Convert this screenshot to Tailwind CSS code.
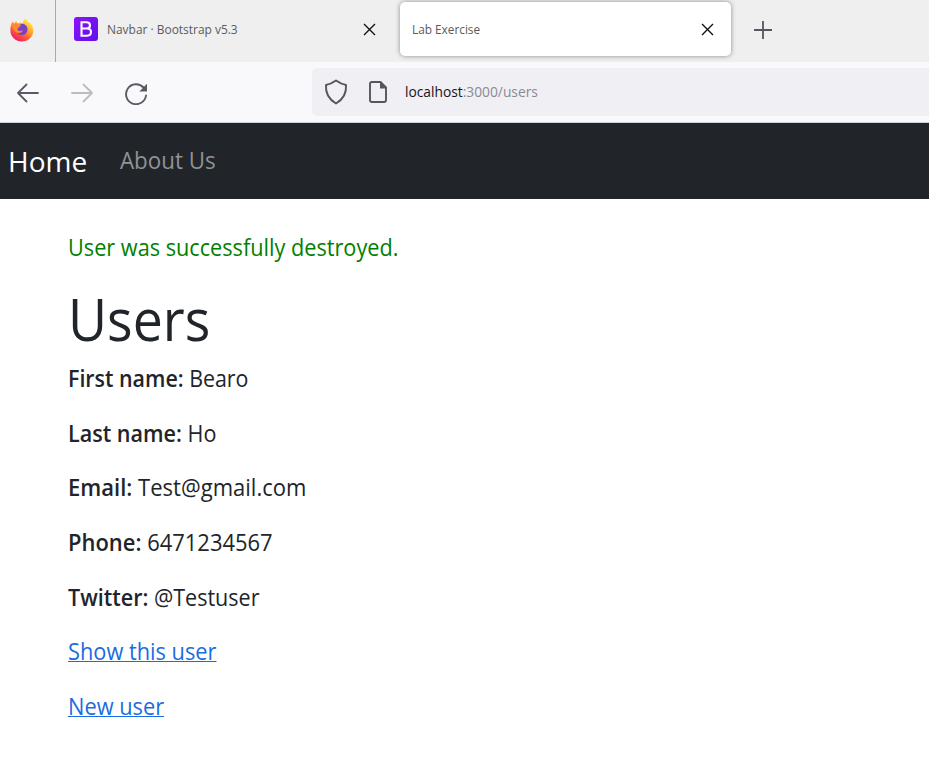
<!DOCTYPE html>
<html lang="en"><head><meta charset="utf-8"><title>Lab Exercise</title>
<script src="https://cdn.jsdelivr.net/npm/@tailwindcss/browser@4"></script></head>
<body class="h-[764px] w-[929px] overflow-hidden bg-white font-['Open_Sans',sans-serif] text-[#212529]">
<header class="h-[123px] border-b border-[#cfcfd8] bg-[#f9f9fb]">
<div class="flex h-[62px] bg-[#efefef]">
<div class="flex w-[56px] items-center border-r border-[#aaa] pl-[10px] pb-[3px]">
<svg class="size-6" viewBox="0 0 24 24"><defs><linearGradient id="fx" x1=".85" y1=".05" x2=".25" y2="1"><stop offset="0" stop-color="#fff44f"/><stop offset=".35" stop-color="#ffb02e"/><stop offset=".65" stop-color="#ff5b36"/><stop offset="1" stop-color="#f0146b"/></linearGradient></defs><path d="M.6 9 2.300 3.500l2 2.200L6 3l1.500 2.500q2-1.500 5.500-.5 0-2.500 2.500-4.500 1.500 2.500 4 4.500l.5-.5q3.300 4 3.300 8a11.400 11 0 0 1-22.900 0q0-2 .2-3.500Z" fill="url(#fx)"/><path d="M8 7.500q3-2.500 6-1.500 4 2 3.500 6-1 5-5.500 5-5 0-5-4.500Z" fill="#7841c8"/><path d="M2 7q3-3 6-1l3 .5-1 2-2.500 2q0 2.500 2.500 2.500l3-.5q-1.500 3-5 2.500Q3 13.500 2 7Z" fill="#ff8a2b"/></svg>
</div>
<div class="flex w-[344px] items-center pl-[18px] pr-[24px] pb-[4px]">
<svg class="size-6" viewBox="0 0 24 24"><defs><linearGradient id="bs" x2="1" y2="1"><stop stop-color="#8b13fb"/><stop offset="1" stop-color="#6210ed"/></linearGradient></defs><rect width="24" height="24" rx="3" fill="url(#bs)"/><path d="M7.500 5.300h5q3.500 0 3.500 3.100t-3.500 3.100h-5Zm0 6.200h5.500q4 0 4 3.600t-4 3.600H7.500Z" fill="none" stroke="#fff" stroke-width="2.100"/></svg>
<span class="mt-[2px] ml-[9px] origin-left scale-x-[.955] whitespace-nowrap text-[12.5px] text-[#5b5b5b]">Navbar · Bootstrap v5.3</span>
<svg class="ml-auto size-[13px]" viewBox="0 0 13 13"><path d="m1 1 11 11M12 1 1 12" stroke="#111" stroke-width="1.4"/></svg>
</div>
<div class="mt-[2px] flex h-[54px] w-[331px] items-center rounded-[5px] bg-white pl-[12px] pr-[17px] shadow-[0_0_5px_#0000006b]">
<span class="mt-[2px] origin-left scale-x-[.945] whitespace-nowrap text-[12.5px] text-[#5b5b5b]">Lab Exercise</span>
<svg class="ml-auto size-[13px]" viewBox="0 0 13 13"><path d="m1 1 11 11M12 1 1 12" stroke="#111" stroke-width="1.4"/></svg>
</div>
<svg class="mt-[21px] ml-[23px] size-[18px]" viewBox="0 0 18 18"><path d="M9 .5v17M.5 9h17" stroke="#55555e" stroke-width="1.800" stroke-linecap="round"/></svg>
</div>
<div class="flex h-[60px] items-center">
<svg class="mt-[2px] ml-[17px] size-[22px]" viewBox="0 0 22 22" fill="none" stroke="#5b5b66" stroke-width="1.800" stroke-linecap="round" stroke-linejoin="round"><path d="M21 11H1M9.500 2.500 1 11l8.500 8.500"/></svg>
<svg class="mt-[2px] ml-[32px] size-[22px]" viewBox="0 0 22 22" fill="none" stroke="#bcbcc2" stroke-width="1.800" stroke-linecap="round" stroke-linejoin="round"><path d="M1 11h20m-8.500-8.500L21 11l-8.500 8.500"/></svg>
<svg class="mt-[3px] ml-[32px] size-[22px]" viewBox="0 0 22 22"><path d="M18.500 4.500A10 10 0 1 0 21 12.500" fill="none" stroke="#5b5b66" stroke-width="1.900" stroke-linecap="round"/><path d="M22 .8v7.700h-7.700Z" fill="#5b5b66"/></svg>
<div class="ml-[165px] flex h-12 flex-1 items-center rounded-l-[5px] bg-[#f0eff4] pl-[12px]">
<svg class="h-[26px] w-6" viewBox="0 0 24 26" fill="none" stroke="#55555e" stroke-width="1.900" stroke-linejoin="round"><path d="M12 1.500q5 3.500 10 4.500 1 12-10 18.500Q1 18 2 6 7 5 12 1.500Z"/></svg>
<svg class="ml-[21px] h-[22px] w-[18px]" viewBox="0 0 18 22"><path d="M3 1h8.500L17 6.500V19q0 2-2 2H3q-2 0-2-2V3q0-2 2-2Z" fill="none" stroke="#55555e" stroke-width="1.900"/><path d="M11 1v6.500h6Z" fill="#55555e"/></svg>
<span class="ml-[18px] origin-left scale-x-[.95] whitespace-nowrap text-[14.500px] text-[#8a8a91]"><span class="text-[#15141a]">localhost</span>:3000/users</span>
</div></div>
</header>
<nav class="flex h-[76px] items-center bg-[#212529] pl-[8px]">
<span class="w-[112px] text-[28px] text-white">Home</span>
<span class="origin-left scale-x-[.95] text-[23.500px] text-[#909294]">About Us</span>
</nav>
<main class="pl-[68px] pt-[30px] text-[23.500px] leading-[36px] font-[370]">
<p class="origin-left scale-x-[.923] text-[#008000]">User was successfully destroyed.</p>
<h1 class="mt-[18px] h-[77px] origin-left scale-x-[.925] text-[58px] leading-[72px] font-[370]">Users</h1>
<div class="flex flex-col gap-[18.700px]">
<p class="origin-left scale-x-[.91]"><strong class="font-semibold">First name:</strong> <span>Bearo</span></p>
<p class="origin-left scale-x-[.917]"><strong class="font-semibold">Last name:</strong> <span>Ho</span></p>
<p class="origin-left scale-x-[.937]"><strong class="font-semibold">Email:</strong> <span>Test@gmail.com</span></p>
<p class="origin-left scale-x-[.934]"><strong class="font-semibold">Phone:</strong> <span>6471234567</span></p>
<p class="origin-left scale-x-[.916]"><strong class="font-semibold">Twitter:</strong> <span>@Testuser</span></p>
<p class="origin-left scale-x-[.927]"><a class="text-[#1a6de0] underline decoration-1">Show this user</a></p>
<p class="origin-left scale-x-[.927]"><a class="text-[#1a6de0] underline decoration-1">New user</a></p>
</div></main>
</body></html>
